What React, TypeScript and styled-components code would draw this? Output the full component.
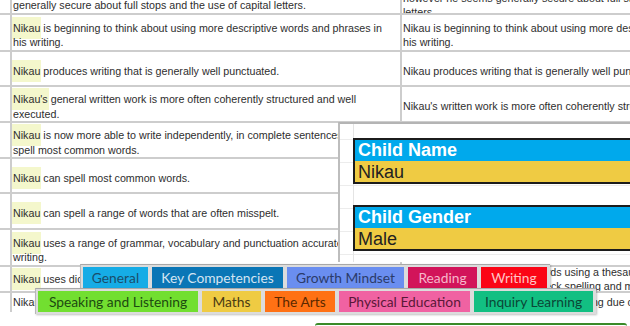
import React from "react";
import styled, { createGlobalStyle } from "styled-components";

const GlobalStyle = createGlobalStyle`
  html, body {
    margin: 0;
    padding: 0;
    background: #ffffff;
    overflow: hidden;
  }
`;

const COLOR = {
  LINE: "#cdcdcd",
  TEXT: "#2e2e2e",
  MARK: "#f4f7cc",
  SKY: "#00a9ec",
  GOLD: "#efcb43",
};

type Row = { h: number; pad?: number; left: React.ReactNode; right: React.ReactNode };

const Nikau = ({ s = "" }: { s?: string }) => <Mark>Nikau{s}</Mark>;

const rows: Row[] = [
  {
    h: 37,
    left: (
      <>
        Nikau sometimes forgets to use punctuation when writing at length, however he is
        <br />
        generally secure about full stops and the use of capital letters.
      </>
    ),
    right: (
      <>
        Nikau sometimes forgets to use punctuation when writing at length,
        <br />
        however he seems generally secure about full stops and the use of capital
        <br />
        letters.
      </>
    ),
  },
  {
    h: 37,
    left: (
      <>
        <Nikau /> is beginning to think about using more descriptive words and phrases in
        <br />
        his writing.
      </>
    ),
    right: (
      <>
        Nikau is beginning to think about using more descriptive words and phrases in
        <br />
        his writing.
      </>
    ),
  },
  {
    h: 35,
    left: (
      <>
        <Nikau /> produces writing that is generally well punctuated.
      </>
    ),
    right: <>Nikau produces writing that is generally well punctuated.</>,
  },
  {
    h: 36,
    left: (
      <>
        <Nikau s="'s" /> general written work is more often coherently structured and well
        <br />
        executed.
      </>
    ),
    right: <>Nikau's written work is more often coherently structured and well executed.</>,
  },
  {
    h: 36,
    left: (
      <>
        <Nikau /> is now more able to write independently, in complete sentences and can
        <br />
        spell most common words.
      </>
    ),
    right: <>Nikau is now able to write independently, in complete sentences.</>,
  },
  {
    h: 35,
    left: (
      <>
        <Nikau /> can spell most common words.
      </>
    ),
    right: <>Nikau can spell most common words.</>,
  },
  {
    h: 36,
    left: (
      <>
        <Nikau /> can spell a range of words that are often misspelt.
      </>
    ),
    right: <>Nikau can spell a range of words that are often misspelt.</>,
  },
  {
    h: 37,
    left: (
      <>
        <Nikau /> uses a range of grammar, vocabulary and punctuation accurately in his
        <br />
        writing.
      </>
    ),
    right: <>Nikau uses a range of grammar, vocabulary and punctuation accurately.</>,
  },
  {
    h: 26,
    pad: 0,
    left: (
      <>
        <Nikau /> uses dictionaries and a thesaurus to find new words.
      </>
    ),
    right: (
      <>
        Nikau seeks and uses new words using a thesaurus and
        <br />
        and he uses a dictionary to check spelling and meaning.
      </>
    ),
  },
  {
    h: 19,
    pad: 0,
    left: <>Nikau checks and edits his own writing.</>,
    right: <>Nikau proofreads and edits his own writing due care.</>,
  },
];

const topTabs = [
  { label: "General", w: 65, bg: "#16ace6", fg: "#1b4d6b" },
  { label: "Key Competencies", w: 131, bg: "#0a76b6", fg: "#d3e4f2" },
  { label: "Growth Mindset", w: 117, bg: "#6a8ef0", fg: "#2b3b6a" },
  { label: "Reading", w: 69, bg: "#d2145a", fg: "#f7b6cb" },
  { label: "Writing", w: 66, bg: "#fb0515", fg: "#ffc4c4" },
];

const bottomTabs = [
  { label: "Speaking and Listening", w: 160, bg: "#72df30", fg: "#1d4a10" },
  { label: "Maths", w: 59, bg: "#efcb43", fg: "#4a3a12" },
  { label: "The Arts", w: 70, bg: "#ff7114", fg: "#5a2800" },
  { label: "Physical Education", w: 131, bg: "#f062a2", fg: "#5a1838" },
  { label: "Inquiry Learning", w: 119, bg: "#12bf82", fg: "#0b4636" },
];

const fields = [
  { name: "Child Name", value: "Nikau" },
  { name: "Child Gender", value: "Male" },
];

const App = () => {
  return (
    <>
      <GlobalStyle />
      <Page>
        <Sheet>
          {rows.map((row, i) => (
            <SheetRow key={i} $h={row.h} $last={i === rows.length - 1}>
              <Gutter />
              <Cell $pad={row.pad ?? 5}>
                <CellText>{row.left}</CellText>
              </Cell>
              <Cell $pad={row.pad ?? 5}>
                <CellText>{row.right}</CellText>
              </Cell>
            </SheetRow>
          ))}
        </Sheet>
        <Footer>
          <GreenButtonTop />
        </Footer>

        <ProfilePanel>
          {fields.map(field => (
            <FieldBox key={field.name}>
              <FieldName>{field.name}</FieldName>
              <FieldValue>{field.value}</FieldValue>
            </FieldBox>
          ))}
        </ProfilePanel>

        <TabStrip $left={80} $top={264}>
          {topTabs.map(tab => (
            <Tab key={tab.label} $w={tab.w} $bg={tab.bg} $fg={tab.fg}>
              {tab.label}
            </Tab>
          ))}
        </TabStrip>
        <TabStrip $left={35} $top={288}>
          {bottomTabs.map(tab => (
            <Tab key={tab.label} $w={tab.w} $bg={tab.bg} $fg={tab.fg}>
              {tab.label}
            </Tab>
          ))}
        </TabStrip>
      </Page>
    </>
  );
};

const Page = styled.div`
  position: relative;
  width: 630px;
  height: 326px;
  overflow: hidden;
  background: #ffffff;
  font-family: "Liberation Sans", Arial, sans-serif;
`;

const Sheet = styled.div`
  display: flex;
  flex-direction: column;
  width: 800px;
  margin-top: -22px;
`;

const SheetRow = styled.div<{ $h: number; $last: boolean }>`
  display: grid;
  grid-template-columns: 10px 390px 400px;
  height: ${p => p.$h}px;
  box-sizing: border-box;
  border-bottom: ${p => (p.$last ? "none" : `2px solid ${COLOR.LINE}`)};
`;

const Gutter = styled.div``;

const Cell = styled.div<{ $pad: number }>`
  display: flex;
  align-items: center;
  border-left: 2px solid ${COLOR.LINE};
  padding: ${p => p.$pad}px 0 0 1px;
  overflow: hidden;
`;

const CellText = styled.div`
  font-size: 10.7px;
  line-height: 14.5px;
  color: ${COLOR.TEXT};
  white-space: nowrap;
`;

const Mark = styled.span`
  background: ${COLOR.MARK};
  padding: 5px 1px;
  margin: 0 -1px;
`;

const Footer = styled.div`
  display: flex;
  padding-left: 315px;
  margin-top: 11px;
`;

const GreenButtonTop = styled.div`
  width: 312px;
  height: 10px;
  border-top: 2px solid #3a8a28;
  border-radius: 3px 3px 0 0;
`;

const ProfilePanel = styled.div`
  position: absolute;
  left: 338px;
  top: 122px;
  width: 300px;
  height: 140px;
  box-sizing: border-box;
  border-top: 2px solid #b4b4b4;
  border-left: 2px solid #bdbdbd;
  background-color: #ffffff;
  background-image: linear-gradient(90deg, transparent 13px, #e4e4e4 13px, #e4e4e4 14px, transparent 14px),
    linear-gradient(to bottom, transparent 15px, #ececec 15px, #ececec 16px, transparent 16px),
    repeating-linear-gradient(to bottom, transparent 0, transparent 22px, #ececec 22px, #ececec 23px);
  background-position: 0 0, 0 0, 0 16px;
  padding: 14px 0 0 13px;
  display: flex;
  flex-direction: column;
  gap: 21px;
`;

const FieldBox = styled.div`
  width: 300px;
  border: 2px solid #1c1c1c;
  display: flex;
  flex-direction: column;
`;

const FieldName = styled.div`
  height: 21px;
  line-height: 21px;
  background: ${COLOR.SKY};
  color: #ffffff;
  font-weight: 700;
  font-size: 18px;
  padding-left: 3px;
`;

const FieldValue = styled.div`
  height: 21px;
  line-height: 22px;
  background: ${COLOR.GOLD};
  color: #222222;
  font-size: 18px;
  padding-left: 3px;
`;

const TabStrip = styled.div<{ $left: number; $top: number }>`
  position: absolute;
  left: ${p => p.$left}px;
  top: ${p => p.$top}px;
  display: flex;
  gap: 4px;
  padding: 2px 3px 2px 2px;
  background: #dcdcdc;
  border-top: 1px solid #a8a8a8;
  border-left: 1px solid #b8b8b8;
  box-shadow: 1px 1px 2px rgba(0, 0, 0, 0.25);
`;

const Tab = styled.div<{ $w: number; $bg: string; $fg: string }>`
  width: ${p => p.$w}px;
  height: 21px;
  display: flex;
  align-items: center;
  justify-content: center;
  background: ${p => p.$bg};
  color: ${p => p.$fg};
  font-family: Lato, "Open Sans", sans-serif;
  font-size: 13.8px;
  white-space: nowrap;
`;

export default App;
